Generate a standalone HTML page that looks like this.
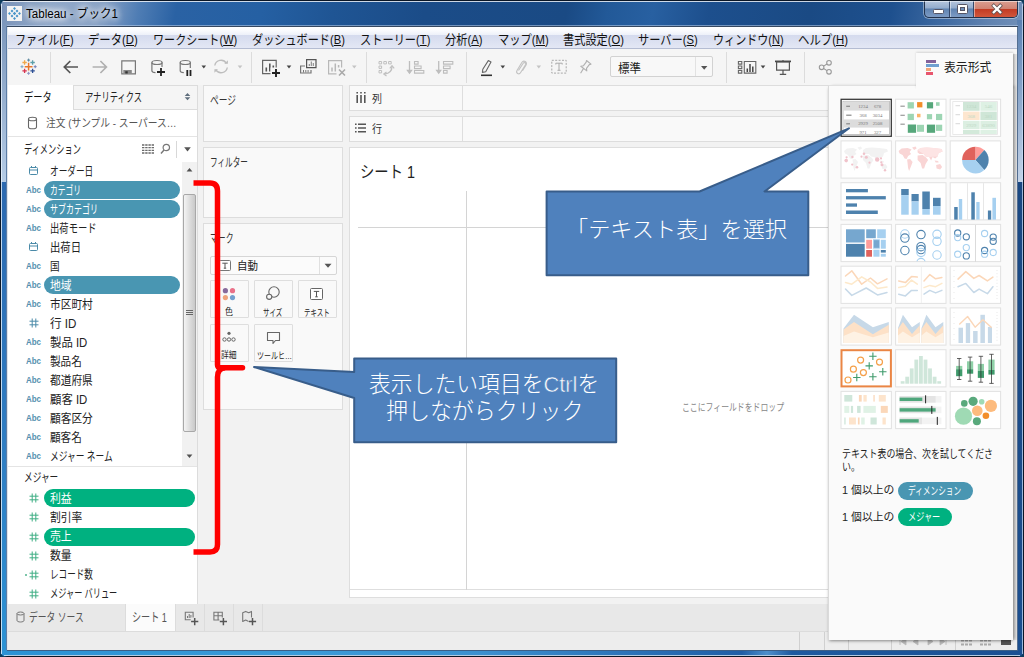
<!DOCTYPE html>
<html lang="ja"><head><meta charset="utf-8"><title>Tableau - ブック1</title>
<style>
html,body{margin:0;padding:0;background:#0d3b5a;}
body{width:1024px;height:657px;overflow:hidden;font-family:"Liberation Sans","Noto Sans CJK JP",sans-serif;}
#win{position:absolute;left:0;top:0;width:1024px;height:657px;overflow:hidden;background:#1b4a84;border-radius:7px 7px 7px 7px;}
#win *{position:absolute;box-sizing:border-box;}
#win u{position:static;}
.t{white-space:nowrap;transform-origin:0 50%;display:block;}
.t u{text-decoration:underline;text-underline-offset:1px;}
.pill{height:18px;border-radius:9px;}
.card{background:#f9f9f9;border:1px solid #dddddd;}
.sep{width:1px;background:#dcdcdc;top:52px;height:31px;}
.th{width:51px;height:38px;background:#fff;border:1px solid #e3e3e3;overflow:hidden;}
.th svg{left:0;top:0;}
.mbtn{width:39px;height:38px;border:1px solid #dedede;background:#f9f9f9;border-radius:1px;}

</style></head>
<body>
<div id="win">
<!-- window frame -->
<div id="frame-top" style="left:0;top:0;width:1024px;height:27px;background:linear-gradient(100deg,#7992b8 0px,#92a9c9 50px,#8aa3c6 100px,#4f7db4 138px,#2a62a4 175px,#2560a3 260px,#1f5594 330px,#1b4c88 420px,#1a4a84 560px,#225998 600px,#2860a1 645px,#1d4f8d 700px,#1a4a84 800px,#1e508e 880px,#3d69a1 930px,#6284b1 980px,#7795bc 1024px);"></div>
<div style="left:1px;top:1px;width:1022px;height:1px;background:rgba(255,255,255,.55)"></div>
<div style="left:0;top:0;width:1024px;height:1px;background:#0a1626"></div>
<!-- left frame -->
<div style="left:0;top:20px;width:8px;height:162px;background:linear-gradient(#7b96bb,#b5cce6)"></div>
<div style="left:0;top:182px;width:8px;height:475px;background:linear-gradient(#2c69b0,#2f7fc4 60%,#2b92d4)"></div>
<div style="left:0;top:4px;width:1px;height:650px;background:#0a1626"></div>
<div style="left:1px;top:4px;width:1px;height:650px;background:rgba(235,245,255,.8)"></div>
<div style="left:6px;top:26px;width:1px;height:624px;background:#5d7da6"></div>
<div style="left:7px;top:26px;width:1px;height:624px;background:#dfe5ec"></div>
<!-- right frame -->
<div style="left:1017px;top:20px;width:7px;height:162px;background:linear-gradient(#5a80b2,#c3d3e8)"></div>
<div style="left:1017px;top:182px;width:7px;height:475px;background:linear-gradient(#1a4882,#1b4f90)"></div>
<div style="left:1017px;top:26px;width:1px;height:624px;background:#546f92"></div>
<div style="left:1022px;top:4px;width:1px;height:650px;background:rgba(200,220,245,.75)"></div>
<div style="left:1023px;top:4px;width:1px;height:650px;background:#0a1626"></div>
<!-- bottom frame -->
<div style="left:2px;top:650px;width:1020px;height:5px;background:linear-gradient(90deg,#2b92d4 0,#3a9bd8 300px,#3c90cf 480px,#2a70b6 640px,#1f5ea6 740px,#4d8fcb 765px,#1d5aa0 790px,#1b4f92 1020px)"></div>
<div style="left:7px;top:650px;width:1011px;height:1px;background:#3c5f86"></div>
<div style="left:4px;top:655px;width:1016px;height:1px;background:rgba(215,235,250,.8)"></div>
<div style="left:4px;top:656px;width:1016px;height:1px;background:#0a1626"></div>
<!-- title icon -->
<div style="left:7px;top:6px;width:15px;height:15px;background:#f3f3f3;"></div>
<svg style="left:7px;top:6px" width="15" height="15" viewBox="0 0 15 15"><path d="M7.50 1.05l1.45 1.45-1.45 1.45-1.45-1.45zM5.00 3.55l1.45 1.45-1.45 1.45-1.45-1.45zM2.50 6.05l1.45 1.45-1.45 1.45-1.45-1.45zM10.00 3.55l1.45 1.45-1.45 1.45-1.45-1.45zM7.50 5.80l1.70 1.70-1.70 1.70-1.70-1.70zM5.00 8.55l1.45 1.45-1.45 1.45-1.45-1.45zM12.50 6.05l1.45 1.45-1.45 1.45-1.45-1.45zM10.00 8.55l1.45 1.45-1.45 1.45-1.45-1.45zM7.50 11.05l1.45 1.45-1.45 1.45-1.45-1.45z" fill="#4693c8"/></svg>
<!-- window buttons -->
<div style="left:924px;top:0;width:94px;height:18px;border:1px solid #22324c;border-top:none;border-radius:0 0 5px 5px;background:linear-gradient(#b9c9df 0,#93abcc 48%,#5f83b1 52%,#7d9bc4 100%);overflow:hidden;box-shadow:0 0 0 1px rgba(255,255,255,.4)">
  <div style="left:49px;top:0;width:45px;height:18px;background:linear-gradient(#dba194 0,#d08373 48%,#c23c24 52%,#d3593d 100%);"></div>
  <div style="left:24px;top:0;width:1px;height:18px;background:#34486a"></div>
  <div style="left:25px;top:0;width:1px;height:18px;background:rgba(255,255,255,.45)"></div>
  <div style="left:48px;top:0;width:1px;height:18px;background:#34486a"></div>
  <div style="left:49px;top:0;width:1px;height:18px;background:rgba(255,255,255,.45)"></div>
  <div style="left:8px;top:9px;width:11px;height:5px;background:#fff;border:1px solid #556;border-radius:1.500px"></div>
  <div style="left:32px;top:4px;width:11px;height:10px;background:#fff;border:1px solid #556;border-radius:1.500px"></div>
  <div style="left:35px;top:7px;width:5px;height:4px;background:#6f8fba;border:1px solid #556;"></div>
  <svg style="left:64.500px;top:3px" width="14" height="12" viewBox="0 0 14 12"><path d="M3.800 2.800l6.400 6.400M10.200 2.800l-6.400 6.400" stroke="#655" stroke-width="3.800" stroke-linecap="square"/><path d="M3.800 2.800l6.400 6.400M10.200 2.800l-6.400 6.400" stroke="#fff" stroke-width="2.300" stroke-linecap="square"/></svg>
</div>
<div style="left:1px;top:1px;width:1022px;height:1px;background:rgba(255,255,255,.5);border-radius:6px"></div>
<div style="left:3px;top:0;width:1018px;height:1px;background:#0a1626"></div>
<div style="left:7px;top:25px;width:1011px;height:1px;background:rgba(190,210,235,.55)"></div>
<div style="left:7px;top:26px;width:1011px;height:1px;background:#364860"></div>
<!-- client -->
<div id="client" style="left:8px;top:27px;width:1009px;height:623px;background:#f2f2f2;"></div>
<!-- menu bar -->
<div style="left:8px;top:27px;width:1009px;height:22px;background:linear-gradient(#ffffff 0,#fbfcfe 3px,#edf0f9 8px,#d5dbee 8.5px,#e3e7f4 21px,#b4bcd2 21px,#b4bcd2 22px);"></div>
<!-- toolbar -->
<div style="left:8px;top:49px;width:1009px;height:36px;background:#f5f5f5;"></div>
<div class="sep" style="left:50px"></div>
<div class="sep" style="left:251px"></div>
<div class="sep" style="left:366px"></div>
<div class="sep" style="left:466px"></div>
<div class="sep" style="left:726px"></div>
<div class="sep" style="left:804px"></div>
<!-- TOOLBAR-ICONS-START -->
<svg style="left:0;top:49px" width="1024" height="37" viewBox="0 49 1024 37" fill="none">
  <!-- tableau logo -->
  <g stroke-width="1.5">
    <path d="M28.600 62.800v7.800M24.700 66.700h7.800" stroke="#e8762c" stroke-width="1.500"/>
    <path d="M24.600 60.300v4.400M22.400 62.500h4.400" stroke="#f0a84a" stroke-width="1.300"/>
    <path d="M32.600 60.300v4.400M30.400 62.500h4.400" stroke="#5b9ea9" stroke-width="1.300"/>
    <path d="M24.600 68.700v4.400M22.400 70.900h4.400" stroke="#d8334f" stroke-width="1.300"/>
    <path d="M32.600 68.700v4.400M30.400 70.900h4.400" stroke="#2c4f94" stroke-width="1.300"/>
    <path d="M28.600 58.600v3M27.100 60.100h3" stroke="#5b879e" stroke-width="1"/>
    <path d="M28.600 71.800v3M27.100 73.300h3" stroke="#8a94c4" stroke-width="1"/>
    <path d="M22 65.200v3M20.500 66.700h3" stroke="#7aa5c8" stroke-width="1"/>
    <path d="M35.200 65.200v3M33.700 66.700h3" stroke="#6f7fb8" stroke-width="1"/>
  </g>
  <!-- back / forward -->
  <path d="M78 67H64.500M70.300 61l-6 6 6 6" stroke="#555" stroke-width="1.700"/>
  <path d="M92.600 67H106M100.400 61l6 6-6 6" stroke="#b0b0b0" stroke-width="1.700"/>
  <!-- save -->
  <path d="M121.800 60.800h13.600v13h-13.600z" stroke="#777" stroke-width="1.200"/>
  <path d="M123.300 70h8.500v3.600h-8.500z" fill="#888" stroke="none"/>
  <path d="M125.300 71.300h2.400v2.300h-2.400z" fill="#333" stroke="none"/>
  <!-- new data source -->
  <path d="M151.900 62.500v8.200c0 1 1.600 1.800 3.600 2M162 62.500v4.500" stroke="#777" stroke-width="1.200"/>
  <ellipse cx="157" cy="62.500" rx="5.100" ry="2" stroke="#777" stroke-width="1.200"/>
  <path d="M161 68v8M157 72h8" stroke="#222" stroke-width="1.800"/>
  <!-- pause data source -->
  <path d="M180.200 62.500v8.200c0 1 1.600 1.800 3.600 2M190.300 62.500v5.500" stroke="#777" stroke-width="1.200"/>
  <ellipse cx="185.300" cy="62.500" rx="5.100" ry="2" stroke="#777" stroke-width="1.200"/>
  <path d="M187.300 70v6M190.500 70v6" stroke="#222" stroke-width="1.800"/>
  <path d="M201.500 65.500h4.600l-2.300 3z" fill="#444"/>
  <!-- refresh -->
  <path d="M214.800 65.500a6.300 6.300 0 0 1 11.600-2.200M227.300 67.500a6.300 6.300 0 0 1-11.600 2.200" stroke="#bdbdbd" stroke-width="1.400"/>
  <path d="M224.300 63.800h3.600v-3.600zM218 69.200h-3.600v3.600z" fill="#bdbdbd"/>
  <path d="M237.700 65.500h4.600l-2.300 3z" fill="#c4c4c4"/>
  <!-- new worksheet -->
  <path d="M262.600 60.400h13.600v13.300h-13.600z" stroke="#666" stroke-width="1.200"/>
  <path d="M266.300 71.500v-4M269.800 71.500v-8M273.300 71.500v-6" stroke="#555" stroke-width="1.600"/>
  <path d="M270.500 67.500h10v10h-10z" fill="#f5f5f5"/>
  <path d="M276 69v8M272 73h8" stroke="#222" stroke-width="1.900"/>
  <path d="M286.700 65.500h4.600l-2.300 3z" fill="#444"/>
  <!-- duplicate -->
  <path d="M305 66h-4.400v7h10.400v-3" stroke="#777" stroke-width="1.200"/>
  <path d="M303.500 72.500v-2.500M305.800 72.500v-2.500M308.100 72.500v-2.500" stroke="#777" stroke-width="1"/>
  <path d="M306.600 59.600h9.400v8h-9.400z" stroke="#555" stroke-width="1.200"/>
  <path d="M309.300 66v-2M311.300 66v-4.500M313.300 66v-3" stroke="#888" stroke-width="1.100"/>
  <!-- clear -->
  <path d="M328.600 60.600h13v13.200h-13z" stroke="#b8b8b8" stroke-width="1.200"/>
  <path d="M332 71.500v-4M335.300 71.500v-8M338.600 68v-3" stroke="#b8b8b8" stroke-width="1.500"/>
  <path d="M336.500 67.500h9v9h-9z" fill="#f5f5f5"/>
  <path d="M339 69.500l6 6M345 69.500l-6 6" stroke="#aaa" stroke-width="1.600"/>
  <path d="M352 65.500h4.600l-2.300 3z" fill="#c4c4c4"/>
  <!-- swap -->
  <g stroke="#c0c0c0" stroke-width="1">
    <path d="M379 61.500h2.600v2.400h-2.600zM383.800 61.500h2.600v2.400h-2.600zM388.600 61.500h2.600v2.400h-2.600zM379 66h2.600v2.400h-2.600zM379 70.500h2.600v2.400h-2.600z"/>
    <path d="M392 66.500c0 4.500-3 7-7.500 7.500" stroke-width="1.300"/>
    <path d="M389.800 68.300l2.200-2.600 2.200 2.600M386.500 72l-2.700 2 2.700 2" stroke-width="1.200"/>
  </g>
  <!-- sort asc -->
  <g stroke="#bdbdbd" stroke-width="1.100">
    <path d="M409.500 61v11" stroke-width="1.300"/><path d="M407.300 70.300h4.400l-2.200 3z" fill="#bdbdbd"/>
    <path d="M414.500 61.500h3.600v2.600h-3.600zM414.500 66h6.600v2.600h-6.600zM414.500 70.500h9.300v2.600h-9.300z"/>
    <path d="M438.700 61v11" stroke-width="1.300"/><path d="M436.500 70.300h4.400l-2.200 3z" fill="#bdbdbd"/>
    <path d="M443.500 61.500h9.300v2.600h-9.300zM443.500 66h6.600v2.600h-6.600zM443.500 70.500h3.600v2.600h-3.600z"/>
  </g>
  <!-- highlight pen -->
  <path d="M488.300 60.600l2.700 1.400-5.300 9.800-3.300.6.400-3.200z" stroke="#666" stroke-width="1.100" stroke-linejoin="round"/>
  <path d="M481 75.300h11" stroke="#333" stroke-width="1.600"/>
  <path d="M500.500 65.500h4.600l-2.300 3z" fill="#444"/>
  <!-- paperclip -->
  <path d="M518.500 70.500l4.700-7.200c1-1.500 3.200-.3 2.300 1.400l-5 8c-1.500 2.300-5 .4-3.500-2.200l4.800-8c1.800-2.700 6-.6 4.300 2.400l-3.600 5.800" stroke="#c2c2c2" stroke-width="1.100"/>
  <path d="M536.500 65.500h4.600l-2.300 3z" fill="#c4c4c4"/>
  <!-- T box -->
  <path d="M551.800 60.300h14.400v12.800h-14.400z" stroke="#a8a8a8" stroke-width="1" stroke-dasharray="2 1.400"/>
  <path d="M555.800 64.500v-1.300h6.400v1.300M559 63.200v7M557.500 70.300h3" stroke="#aaa" stroke-width="1"/>
  <!-- pin -->
  <path d="M586.500 60.500l4.500 3.700-1.700.4-2.800 3.700.3 2.600-6-4.600 2.700-.6 2.700-3.600zM583.400 68.600l-2.800 4.600" stroke="#b0b0b0" stroke-width="1.100" stroke-linejoin="round"/>
  <!-- show cards -->
  <g stroke="#666" stroke-width="1.100">
    <path d="M738.400 61.500h3.400v2.600h-3.400zM738.400 66h3.400v2.600h-3.400zM738.400 70.500h3.400v2.600h-3.400z"/>
    <path d="M744.300 61.500h11.500v11.600h-11.500z"/>
    <path d="M747.300 72v-3.500M750 72v-8M752.800 72v-5.500" stroke="#444" stroke-width="1.500"/>
  </g>
  <path d="M760.700 65.500h4.600l-2.300 3z" fill="#444"/>
  <!-- presentation -->
  <path d="M775 61.400h16" stroke="#444" stroke-width="1.700"/>
  <path d="M776.600 62h12.800v8.200h-12.800zM783 70.200v4M779.800 74.300h6.400M783 60v1" stroke="#555" stroke-width="1.200"/>
  <!-- share -->
  <g stroke="#9a9a9a" stroke-width="1.100">
    <circle cx="829" cy="62.800" r="2.300"/><circle cx="821.600" cy="67.300" r="2.300"/><circle cx="829" cy="71.800" r="2.300"/>
    <path d="M827 64l-3.400 2.100M823.600 68.500l3.400 2.100"/>
  </g>
</svg>
<!-- TOOLBAR-ICONS-END -->
<!-- dropdown -->
<div style="left:610px;top:56px;width:103px;height:21px;background:#f8f8f8;border:1px solid #d2d2d2;border-radius:2px"></div>
<div style="left:695px;top:57px;width:1px;height:19px;background:#e2e2e2"></div>
<svg style="left:700px;top:64.500px" width="9" height="6" viewBox="0 0 9 6"><path d="M1 1h6.400l-3.200 3.800z" fill="#555"/></svg>
<!-- left pane -->
<div style="left:8px;top:85px;width:190px;height:519px;background:#fff;border-right:1px solid #dcdcdc"></div>
<div style="left:73px;top:85px;width:125px;height:25px;background:#f5f5f5;border:1px solid #dcdcdc;"></div>
<svg style="left:184px;top:93px" width="7" height="8" viewBox="0 0 7 8"><path d="M.7 3.100l2.800-3 2.800 3zM.7 4.300l2.800 3 2.800-3z" fill="#5f6e7c"/></svg>
<svg style="left:27px;top:116px" width="11" height="14" viewBox="0 0 11 14"><path d="M1.5 3v8c0 1 1.8 1.8 4 1.8s4-.8 4-1.8V3" fill="none" stroke="#666" stroke-width="1.1"/><ellipse cx="5.5" cy="3" rx="4" ry="1.8" fill="none" stroke="#666" stroke-width="1.1"/></svg>
<div style="left:8px;top:136px;width:189px;height:1px;background:#e4e4e4"></div>
<!-- dim header icons -->
<svg style="left:142px;top:144px" width="12" height="10" viewBox="0 0 12 10"><path d="M0 1h12M0 3.7h12M0 6.4h12M0 9h12" stroke="#6a6a6a" stroke-width="1.300" stroke-dasharray="2.400 .800"/></svg>
<svg style="left:160px;top:143px" width="11" height="12" viewBox="0 0 11 12"><circle cx="6.3" cy="4.5" r="3.2" fill="none" stroke="#777" stroke-width="1.2"/><path d="M4 7l-3 3.5" stroke="#777" stroke-width="1.4"/></svg>
<div style="left:176px;top:141px;width:1px;height:17px;background:#d8d8d8"></div>
<svg style="left:184px;top:146.500px" width="7" height="5" viewBox="0 0 7 5"><path d="M.2 .3h6.600l-3.300 4.200z" fill="#555"/></svg>
<!-- scrollbar -->
<div style="left:182px;top:162px;width:15px;height:304px;background:#f1f1f1"></div>
<div style="left:183px;top:194px;width:13px;height:238px;background:linear-gradient(90deg,#f4f4f4,#dedede 50%,#c9c9c9);border:1px solid #a8a8a8;border-radius:2px"></div>
<div style="left:186px;top:310px;width:7px;height:1px;background:#666;box-shadow:0 2px 0 #666,0 4px 0 #666"></div>
<svg style="left:186px;top:167px" width="7" height="5" viewBox="0 0 7 5"><path d="M.6 4.500h5.800l-2.900-3.600z" fill="#505050"/></svg>
<svg style="left:186px;top:454px" width="7" height="5" viewBox="0 0 7 5"><path d="M.6 .5h5.800l-2.900 3.600z" fill="#505050"/></svg>
<div style="left:8px;top:466px;width:189px;height:1px;background:#e4e4e4"></div>
<!-- cards -->
<div class="card" style="left:203px;top:85px;width:140px;height:57px"></div>
<div class="card" style="left:203px;top:147px;width:140px;height:71px"></div>
<div class="card" style="left:203px;top:223px;width:140px;height:187px"></div>
<!-- marks dropdown -->
<div style="left:210px;top:256px;width:127px;height:19px;background:#fbfbfb;border:1px solid #d6d6d6;border-radius:2px"></div>
<div style="left:319px;top:257px;width:1px;height:17px;background:#e0e0e0"></div>
<svg style="left:324px;top:263px" width="8" height="6" viewBox="0 0 8 6"><path d="M.5 .8h7l-3.5 4z" fill="#555"/></svg>
<svg style="left:219px;top:260px" width="12" height="11" viewBox="0 0 12 11"><rect x=".5" y=".5" width="11" height="10" rx="1" fill="#fff" stroke="#777"/><path d="M3.3 3.2h5.4M6 3.2v5M4.8 8.2h2.4" stroke="#555" stroke-width="1" fill="none"/></svg>
<!-- marks buttons -->
<div class="mbtn" style="left:210px;top:280px"></div>
<div class="mbtn" style="left:254px;top:280px"></div>
<div class="mbtn" style="left:298px;top:280px"></div>
<div class="mbtn" style="left:210px;top:324px"></div>
<div class="mbtn" style="left:254px;top:324px"></div>
<svg style="left:222px;top:286.700px" width="15" height="15" viewBox="0 0 15 15"><circle cx="3.400" cy="3.700" r="2.600" fill="#876a9c"/><circle cx="10.500" cy="3.700" r="2.600" fill="#ea7088"/><circle cx="3.400" cy="10.600" r="2.600" fill="#efa47c"/><circle cx="10.500" cy="10.600" r="2.600" fill="#74a0d0"/></svg>
<svg style="left:265px;top:286px" width="16" height="15" viewBox="0 0 16 15"><circle cx="9" cy="6" r="5.2" fill="none" stroke="#666" stroke-width="1.1"/><circle cx="4.2" cy="10.8" r="2.6" fill="#f9f9f9" stroke="#666" stroke-width="1.1"/></svg>
<svg style="left:310px;top:288px" width="13" height="12" viewBox="0 0 13 12"><rect x=".5" y=".5" width="12" height="11" rx="1" fill="#fff" stroke="#666"/><path d="M3.8 3.4h5.4M6.5 3.4v5.4M5.2 8.8h2.6" stroke="#555" stroke-width="1" fill="none"/></svg>
<svg style="left:222px;top:331px" width="14" height="12" viewBox="0 0 14 12"><circle cx="7" cy="2.3" r="1.6" fill="#666"/><circle cx="2.5" cy="8.5" r="1.7" fill="none" stroke="#666"/><circle cx="7" cy="8.5" r="1.7" fill="none" stroke="#666"/><circle cx="11.5" cy="8.5" r="1.7" fill="none" stroke="#666"/></svg>
<svg style="left:266px;top:331px" width="15" height="14" viewBox="0 0 15 14"><path d="M1.5 1.5h12v8h-4l-2.5 3v-3h-5.5z" fill="none" stroke="#666" stroke-width="1.1" stroke-linejoin="round"/></svg>
<!-- shelves -->
<div class="card" style="left:349px;top:85px;width:668px;height:26px;border-right:none"></div>
<div style="left:462px;top:86px;width:1px;height:24px;background:#dedede"></div>
<div class="card" style="left:349px;top:116px;width:668px;height:26px;border-right:none"></div>
<div style="left:462px;top:117px;width:1px;height:24px;background:#dedede"></div>
<svg style="left:356px;top:92px" width="10" height="11" viewBox="0 0 10 11"><path d="M1.2 0v1.6M1.2 3v8M5 0v1.6M5 3v8M8.8 0v1.6M8.8 3v8" stroke="#555" stroke-width="1.6"/></svg>
<svg style="left:355px;top:123px" width="11" height="10" viewBox="0 0 11 10"><path d="M0 1.2h1.6M3 1.2h8M0 5h1.6M3 5h8M0 8.8h1.6M3 8.8h8" stroke="#555" stroke-width="1.6"/></svg>
<!-- sheet -->
<div style="left:349px;top:147px;width:668px;height:443px;background:#fff;border:1px solid #dedede;border-right:none"></div>
<div style="left:349px;top:590px;width:668px;height:8px;background:#fff;border:1px solid #dedede;border-top:none;border-right:none"></div>
<div style="left:358px;top:227px;width:470px;height:1px;background:#d4d4d4"></div>
<div style="left:466px;top:191px;width:1px;height:399px;background:#d4d4d4"></div>
<!-- bottom tab bar -->
<div style="left:8px;top:604px;width:1009px;height:28px;background:#e8e8e8;border-bottom:1px solid #dcdcdc"></div>
<div style="left:125px;top:604px;width:51px;height:27px;background:#fbfbfb;border-left:1px solid #dcdcdc;border-right:1px solid #dcdcdc"></div>
<div style="left:204px;top:604px;width:1px;height:27px;background:#dcdcdc"></div>
<div style="left:233px;top:604px;width:1px;height:27px;background:#dcdcdc"></div>
<div style="left:262px;top:604px;width:1px;height:27px;background:#dcdcdc"></div>
<svg style="left:16px;top:611px" width="9" height="12" viewBox="0 0 9 12"><path d="M1 2.5v7c0 .8 1.5 1.5 3.5 1.5s3.5-.7 3.5-1.5v-7" fill="none" stroke="#777" stroke-width="1"/><ellipse cx="4.5" cy="2.5" rx="3.5" ry="1.5" fill="none" stroke="#777"/></svg>
<!-- new sheet icons -->
<svg style="left:180px;top:606px" width="80" height="22" viewBox="180 606 80 22" fill="none">
<path d="M185.300 612.200h7.800v7.600h-7.800z" stroke="#777" stroke-width="1.100"/><path d="M187.500 618v-2M189.200 618v-4M190.900 618v-3" stroke="#777" stroke-width="1"/>
<path d="M190.700 617.600h8v8h-8z" fill="#e8e8e8"/><path d="M194.700 618v7.200M191.100 621.600h7.200" stroke="#555" stroke-width="1.500"/>
<path d="M213.900 612.200h8.400v7.800h-8.400zM213.900 615.800h8.400M218.100 612.200v7.800" stroke="#777" stroke-width="1.100"/>
<path d="M219.400 617.600h8v8h-8z" fill="#e8e8e8"/><path d="M223.400 618v7.200M219.800 621.600h7.200" stroke="#555" stroke-width="1.500"/>
<path d="M242.700 612.800l3-1.400 3 1.400 2.800-1.400v8.600l-2.800 1.400-3-1.400-3 1.400z" stroke="#777" stroke-width="1.100" stroke-linejoin="round"/>
<path d="M248.500 617.600h8v8h-8z" fill="#e8e8e8"/><path d="M252.500 618v7.200M248.900 621.600h7.200" stroke="#555" stroke-width="1.500"/>
</svg>
<!-- status bar -->
<div style="left:8px;top:632px;width:1009px;height:18px;background:#ededed"></div>
<div style="left:799px;top:632px;width:1px;height:18px;background:#d0d0d0"></div>
<div style="left:824px;top:632px;width:1px;height:18px;background:#d0d0d0"></div>
<div style="left:848px;top:632px;width:1px;height:18px;background:#d0d0d0"></div>
<div style="left:891px;top:632px;width:1px;height:18px;background:#d0d0d0"></div>
<div style="left:955px;top:632px;width:1px;height:18px;background:#d0d0d0"></div>
<div style="left:1001px;top:640px;width:10px;height:5px;background:#555"></div>
<svg style="left:961px;top:639px" width="34" height="7" viewBox="0 0 34 7"><path d="M0 1.5h11M0 5.500h11M19 1.500h11M19 5.500h11" stroke="#aaa" stroke-width="2" stroke-dasharray="3 1"/></svg>
<svg style="left:898px;top:637px" width="52" height="9" viewBox="0 0 52 9"><path d="M2 1v7M8 1v7l-5-3.500zM20 1v7l-5-3.500zM30 1v7l5-3.500zM42 1v7l5-3.500zM48 1v7" fill="#b8b8b8" stroke="#b8b8b8" stroke-width=".800"/></svg>
<div style="left:1013px;top:54px;width:4px;height:586px;background:linear-gradient(90deg,#cdcdcd,#e4e4e4)"></div>
<!-- show me panel -->
<div style="left:828px;top:85px;width:185px;height:555px;background:#fafafa;border-left:1px solid #dadada;border-top:1px solid #e0e0e0;box-shadow:0 2px 3px -1px rgba(0,0,0,.4),3px 0 3px -1px rgba(0,0,0,.22);"></div>
<div style="left:916px;top:53px;width:97px;height:36px;background:#fafafa;box-shadow:0 -1px 2px rgba(0,0,0,.12),2px 0 2px -1px rgba(0,0,0,.2);"></div>
<div style="left:916px;top:85px;width:97px;height:6px;background:#fafafa;"></div>
<div style="left:926px;top:60.300px;width:10px;height:2.600px;background:#83629a"></div>
<div style="left:926px;top:64.200px;width:13px;height:2.600px;background:#6fa0d0"></div>
<div style="left:926px;top:68.100px;width:5px;height:2.600px;background:#f0a478"></div>
<div style="left:926px;top:72px;width:7px;height:2.600px;background:#e8556e"></div>
<!-- THUMBS-START -->
<svg style="left:829px;top:90px" width="184" height="345" viewBox="829 90 184 345" fill="none" font-family="Liberation Serif,serif">
<rect x="841.1" y="99.3" width="50.2" height="37.0" fill="#fff" stroke="#333" stroke-width="1.25"/>
<rect x="895.6" y="99.2" width="50.4" height="37.2" fill="#fff" stroke="#e2e2e2" stroke-width="1"/>
<rect x="950.2" y="99.2" width="50.4" height="37.2" fill="#fff" stroke="#e2e2e2" stroke-width="1"/>
<rect x="841.0" y="140.9" width="50.4" height="37.2" fill="#fff" stroke="#e2e2e2" stroke-width="1"/>
<rect x="895.6" y="140.9" width="50.4" height="37.2" fill="#fff" stroke="#e2e2e2" stroke-width="1"/>
<rect x="950.2" y="140.9" width="50.4" height="37.2" fill="#fff" stroke="#e2e2e2" stroke-width="1"/>
<rect x="841.0" y="182.7" width="50.4" height="37.2" fill="#fff" stroke="#e2e2e2" stroke-width="1"/>
<rect x="895.6" y="182.7" width="50.4" height="37.2" fill="#fff" stroke="#e2e2e2" stroke-width="1"/>
<rect x="950.2" y="182.7" width="50.4" height="37.2" fill="#fff" stroke="#e2e2e2" stroke-width="1"/>
<rect x="841.0" y="224.4" width="50.4" height="37.2" fill="#fff" stroke="#e2e2e2" stroke-width="1"/>
<rect x="895.6" y="224.4" width="50.4" height="37.2" fill="#fff" stroke="#e2e2e2" stroke-width="1"/>
<rect x="950.2" y="224.4" width="50.4" height="37.2" fill="#fff" stroke="#e2e2e2" stroke-width="1"/>
<rect x="841.0" y="266.2" width="50.4" height="37.2" fill="#fff" stroke="#e2e2e2" stroke-width="1"/>
<rect x="895.6" y="266.2" width="50.4" height="37.2" fill="#fff" stroke="#e2e2e2" stroke-width="1"/>
<rect x="950.2" y="266.2" width="50.4" height="37.2" fill="#fff" stroke="#e2e2e2" stroke-width="1"/>
<rect x="841.0" y="307.9" width="50.4" height="37.2" fill="#fff" stroke="#e2e2e2" stroke-width="1"/>
<rect x="895.6" y="307.9" width="50.4" height="37.2" fill="#fff" stroke="#e2e2e2" stroke-width="1"/>
<rect x="950.2" y="307.9" width="50.4" height="37.2" fill="#fff" stroke="#e2e2e2" stroke-width="1"/>
<rect x="841.5" y="350.2" width="49.4" height="36.2" fill="#fff" stroke="#ea8544" stroke-width="2"/>
<rect x="895.6" y="349.7" width="50.4" height="37.2" fill="#fff" stroke="#e2e2e2" stroke-width="1"/>
<rect x="950.2" y="349.7" width="50.4" height="37.2" fill="#fff" stroke="#e2e2e2" stroke-width="1"/>
<rect x="841.0" y="391.4" width="50.4" height="37.2" fill="#fff" stroke="#e2e2e2" stroke-width="1"/>
<rect x="895.6" y="391.4" width="50.4" height="37.2" fill="#fff" stroke="#e2e2e2" stroke-width="1"/>
<rect x="950.2" y="391.4" width="50.4" height="37.2" fill="#fff" stroke="#e2e2e2" stroke-width="1"/>
<rect x="843.0" y="101.3" width="46.4" height="33.3" fill="#fff" stroke="#b5b5b5" stroke-width="0.8"/>
<rect x="843.4" y="101.7" width="45.6" height="8.9" fill="#dcdcdc" />
<rect x="843.4" y="119.4" width="45.6" height="8.2" fill="#dcdcdc" />
<text x="863" y="108.2" font-size="4.8" fill="#777" text-anchor="middle">1234</text>
<text x="877.5" y="108.2" font-size="4.8" fill="#777" text-anchor="middle">678</text>
<text x="863" y="116.8" font-size="4.8" fill="#777" text-anchor="middle">368</text>
<text x="877.5" y="116.8" font-size="4.8" fill="#777" text-anchor="middle">3034</text>
<text x="863" y="125.4" font-size="4.8" fill="#777" text-anchor="middle">2929</text>
<text x="877.5" y="125.4" font-size="4.8" fill="#777" text-anchor="middle">2508</text>
<text x="863" y="134.0" font-size="4.8" fill="#777" text-anchor="middle">971</text>
<text x="877.5" y="134.0" font-size="4.8" fill="#777" text-anchor="middle">327</text>
<rect x="846.2" y="105.7" width="3.8" height="1.2" fill="#888" />
<rect x="846.2" y="114.6" width="5.3" height="1.2" fill="#888" />
<rect x="846.2" y="123.2" width="3.8" height="1.2" fill="#888" />
<rect x="900.4" y="105.6" width="4.4" height="1.2" fill="#999" />
<rect x="900.4" y="114.7" width="4.4" height="1.2" fill="#999" />
<rect x="900.4" y="123.6" width="4.4" height="1.2" fill="#999" />
<rect x="907.6" y="102.2" width="6.3" height="6.3" fill="#9dd5b3" />
<rect x="917.1" y="102.1" width="5.3" height="5.3" fill="#f28e2b" />
<rect x="926.9" y="102.2" width="6.2" height="6.2" fill="#56a77b" />
<rect x="936.0" y="102.2" width="3.6" height="3.6" fill="#9dd5b3" />
<rect x="907.6" y="113.8" width="6.3" height="6.3" fill="#9dd5b3" />
<rect x="917.0" y="113.8" width="3.5" height="3.5" fill="#fbb66b" />
<rect x="926.9" y="114.1" width="5.2" height="5.2" fill="#9dd5b3" />
<rect x="936.0" y="113.9" width="6.2" height="6.2" fill="#9dd5b3" />
<rect x="907.8" y="124.5" width="8.3" height="8.3" fill="#56a77b" />
<rect x="917.0" y="124.8" width="7.0" height="7.0" fill="#9dd5b3" />
<rect x="926.9" y="124.6" width="8.2" height="8.2" fill="#56a77b" />
<rect x="936.0" y="124.7" width="6.2" height="6.2" fill="#9dd5b3" />
<rect x="952.8" y="101.6" width="44.8" height="32.8" fill="#fff" stroke="#e4e4e4" stroke-width="0.8"/>
<rect x="955.5" y="105.2" width="4.5" height="1.0" fill="#d8d8d8" />
<rect x="955.5" y="114.2" width="4.5" height="1.0" fill="#d8d8d8" />
<rect x="955.5" y="123.2" width="4.5" height="1.0" fill="#d8d8d8" />
<rect x="963.0" y="102.0" width="16.6" height="8.8" fill="#cfe6d7" />
<rect x="980.4" y="102.0" width="16.4" height="8.8" fill="#def1e4" />
<rect x="963.0" y="111.6" width="16.6" height="8.4" fill="#fde6cf" />
<rect x="980.4" y="111.6" width="16.4" height="8.4" fill="#cfe6d7" />
<rect x="963.0" y="120.8" width="16.6" height="8.4" fill="#dcefe2" />
<rect x="980.4" y="120.8" width="16.4" height="8.4" fill="#dcefe2" />
<rect x="963.0" y="130.0" width="16.6" height="4.0" fill="#d3e9da" />
<rect x="980.4" y="130.0" width="16.4" height="4.0" fill="#def1e4" />
<text x="971.3" y="108.3" font-size="5" fill="#bcd8c5" text-anchor="middle">1234</text>
<text x="988.6" y="108.3" font-size="5" fill="#bcd8c5" text-anchor="middle">546</text>
<text x="971.3" y="117.5" font-size="5" fill="#bcd8c5" text-anchor="middle">368</text>
<text x="988.6" y="117.5" font-size="5" fill="#bcd8c5" text-anchor="middle">381</text>
<text x="971.3" y="126.7" font-size="5" fill="#bcd8c5" text-anchor="middle">2929</text>
<text x="988.6" y="126.7" font-size="5" fill="#bcd8c5" text-anchor="middle">63890</text>
<polygon points="844.0,151.0 847.0,148.5 853.0,148.0 857.0,149.5 855.0,152.0 856.5,154.0 853.5,156.0 852.0,159.0 850.0,158.5 848.0,155.0 845.0,153.5" fill="#f2f2f2"/>
<polygon points="857.5,147.5 861.0,146.5 862.0,148.5 859.5,150.0" fill="#f2f2f2"/>
<polygon points="852.5,159.5 855.5,159.0 858.0,162.0 856.5,166.0 854.5,171.0 853.5,168.0 853.0,163.5" fill="#f2f2f2"/>
<polygon points="863.0,150.0 866.0,148.0 872.0,147.5 879.0,148.0 887.0,149.0 888.0,151.5 884.0,153.0 883.0,156.5 880.5,158.5 878.0,157.0 876.5,160.5 874.5,157.0 871.0,156.5 869.0,154.0 865.0,154.0 863.0,152.5" fill="#f2f2f2"/>
<polygon points="863.0,155.5 868.0,155.0 871.5,157.5 873.5,160.0 871.0,164.0 869.5,168.5 867.5,168.5 866.0,163.0 863.0,160.0" fill="#f2f2f2"/>
<polygon points="881.5,165.0 885.5,164.0 887.5,167.0 885.5,169.5 882.0,168.5" fill="#f2f2f2"/>
<polygon points="880.0,160.5 883.5,161.0 884.0,162.5 881.0,162.5" fill="#f2f2f2"/>
<circle cx="846.6" cy="157.3" r="1.1" fill="#f0c3cb"/>
<circle cx="846.2" cy="160.6" r="1.8" fill="#f0c3cb"/>
<circle cx="852.4" cy="157.0" r="1.2" fill="#f0c3cb"/>
<circle cx="852.2" cy="164.6" r="1.1" fill="#f0c3cb"/>
<circle cx="857.0" cy="167.2" r="1.3" fill="#f0c3cb"/>
<circle cx="861.5" cy="156.7" r="1.1" fill="#f0c3cb"/>
<circle cx="864.0" cy="153.8" r="1.3" fill="#f0c3cb"/>
<circle cx="866.3" cy="157.2" r="1.5" fill="#f0c3cb"/>
<circle cx="869.5" cy="162.7" r="1.1" fill="#f0c3cb"/>
<circle cx="877.2" cy="159.5" r="2.2" fill="#f0c3cb"/>
<circle cx="881.0" cy="158.4" r="1.1" fill="#f0c3cb"/>
<circle cx="881.3" cy="162.4" r="1.1" fill="#f0c3cb"/>
<circle cx="882.0" cy="164.7" r="1.5" fill="#f0c3cb"/>
<circle cx="885.0" cy="170.2" r="1.2" fill="#f0c3cb"/>
<polygon points="898.6,151.0 901.6,148.5 907.6,148.0 911.6,149.5 909.6,152.0 911.1,154.0 908.1,156.0 906.6,159.0 904.6,158.5 902.6,155.0 899.6,153.5" fill="#f9d5d5"/>
<polygon points="912.1,147.5 915.6,146.5 916.6,148.5 914.1,150.0" fill="#f9d5d5"/>
<polygon points="907.1,159.5 910.1,159.0 912.6,162.0 911.1,166.0 909.1,171.0 908.1,168.0 907.6,163.5" fill="#f9d5d5"/>
<polygon points="917.6,150.0 920.6,148.0 926.6,147.5 933.6,148.0 941.6,149.0 942.6,151.5 938.6,153.0 937.6,156.5 935.1,158.5 932.6,157.0 931.1,160.5 929.1,157.0 925.6,156.5 923.6,154.0 919.6,154.0 917.6,152.5" fill="#f9d5d5"/>
<polygon points="917.6,155.5 922.6,155.0 926.1,157.5 928.1,160.0 925.6,164.0 924.1,168.5 922.1,168.5 920.6,163.0 917.6,160.0" fill="#f9d5d5"/>
<polygon points="936.1,165.0 940.1,164.0 942.1,167.0 940.1,169.5 936.6,168.5" fill="#f9d5d5"/>
<polygon points="934.6,160.5 938.1,161.0 938.6,162.5 935.6,162.5" fill="#f9d5d5"/>
<polygon points="917.6,150.0 920.6,148.0 926.6,147.5 933.6,148.0 941.6,149.0 942.6,151.5 938.6,153.0 937.6,156.5 929.1,157.0 925.6,156.5 923.6,154.0" fill="#fde4e4"/>
<path d="M975.40 160.00 L975.40 146.70 A13.30 13.30 0 0 1 984.30 150.12 Z" fill="#ff9d9a"/>
<path d="M975.40 160.00 L984.30 150.12 A13.30 13.30 0 0 1 984.30 169.88 Z" fill="#4e82ad"/>
<path d="M975.40 160.00 L984.30 169.88 A13.30 13.30 0 0 1 962.10 160.00 Z" fill="#a6d0f0"/>
<path d="M975.40 160.00 L962.10 160.00 A13.30 13.30 0 0 1 975.40 146.70 Z" fill="#e0625c"/>
<rect x="846.0" y="189.0" width="21.9" height="3.3" fill="#4e82ad" />
<rect x="846.0" y="196.1" width="39.8" height="3.3" fill="#4e82ad" />
<rect x="846.0" y="203.4" width="11.0" height="3.3" fill="#4e82ad" />
<rect x="846.0" y="210.5" width="31.8" height="3.5" fill="#4e82ad" />
<rect x="901.2" y="189.0" width="7.5" height="6.1" fill="#4e82ad" />
<rect x="901.2" y="195.1" width="7.5" height="19.6" fill="#a6d0f0" />
<rect x="911.5" y="194.0" width="7.2" height="7.4" fill="#4e82ad" />
<rect x="911.5" y="201.4" width="7.2" height="13.3" fill="#a6d0f0" />
<rect x="922.3" y="191.5" width="7.5" height="17.5" fill="#4e82ad" />
<rect x="922.3" y="209.0" width="7.5" height="5.7" fill="#a6d0f0" />
<rect x="933.0" y="197.8" width="7.6" height="8.2" fill="#4e82ad" />
<rect x="933.0" y="206.0" width="7.6" height="8.7" fill="#a6d0f0" />
<rect x="967.3" y="183.2" width="0.7" height="36.4" fill="#ddd" />
<rect x="983.1" y="183.2" width="0.7" height="36.4" fill="#ddd" />
<rect x="954.2" y="207.0" width="3.5" height="12.6" fill="#4e82ad" />
<rect x="958.8" y="199.0" width="3.4" height="20.6" fill="#a6d0f0" />
<rect x="971.3" y="192.3" width="3.5" height="27.3" fill="#4e82ad" />
<rect x="976.3" y="202.0" width="3.3" height="17.6" fill="#a6d0f0" />
<rect x="987.9" y="210.5" width="3.3" height="9.1" fill="#4e82ad" />
<rect x="992.4" y="197.8" width="3.6" height="21.8" fill="#a6d0f0" />
<rect x="846.0" y="229.3" width="18.7" height="13.2" fill="#76a7cf" />
<rect x="846.0" y="243.9" width="18.7" height="12.8" fill="#4e82ad" />
<rect x="866.2" y="229.3" width="9.6" height="8.9" fill="#76a7cf" />
<rect x="877.2" y="229.3" width="8.6" height="8.9" fill="#a6d0f0" />
<rect x="866.2" y="239.8" width="5.8" height="8.9" fill="#ff9d9a" />
<rect x="866.2" y="250.0" width="5.8" height="6.7" fill="#e0625c" />
<rect x="873.4" y="239.8" width="6.1" height="8.4" fill="#76a7cf" stroke="#a6d0f0" stroke-width="0.8"/>
<rect x="880.8" y="239.8" width="5.0" height="8.9" fill="#a6d0f0" />
<rect x="873.4" y="249.7" width="6.1" height="7.0" fill="#a6d0f0" />
<rect x="880.8" y="250.0" width="5.0" height="2.6" fill="#4e82ad" />
<rect x="880.8" y="253.8" width="5.0" height="2.9" fill="#a6d0f0" />
<clipPath id="c11"><rect x="896.2" y="225" width="49.4" height="36.2"/></clipPath><g clip-path="url(#c11)">
<circle cx="904.9" cy="234.0" r="4.2" fill="none" stroke="#a6d0f0" stroke-width="1.1"/>
<circle cx="904.9" cy="238.1" r="4.2" fill="none" stroke="#4e82ad" stroke-width="1.1"/>
<circle cx="904.9" cy="250.5" r="4.2" fill="none" stroke="#4e82ad" stroke-width="1.1"/>
<circle cx="921.0" cy="234.6" r="4.2" fill="none" stroke="#4e82ad" stroke-width="1.1"/>
<circle cx="921.0" cy="246.7" r="4.2" fill="none" stroke="#4e82ad" stroke-width="1.1"/>
<circle cx="921.0" cy="249.6" r="4.2" fill="none" stroke="#4e82ad" stroke-width="1.1"/>
<circle cx="921.0" cy="252.4" r="4.2" fill="none" stroke="#a6d0f0" stroke-width="1.1"/>
<circle cx="937.0" cy="234.3" r="4.2" fill="none" stroke="#a6d0f0" stroke-width="1.1"/>
<circle cx="937.0" cy="241.3" r="4.2" fill="none" stroke="#a6d0f0" stroke-width="1.1"/>
<circle cx="937.0" cy="255.0" r="4.2" fill="none" stroke="#a6d0f0" stroke-width="1.1"/>
<circle cx="921.0" cy="262.6" r="4.2" fill="none" stroke="#a6d0f0" stroke-width="1.1"/>
</g>
<rect x="975.0" y="225.0" width="0.7" height="36.5" fill="#ccc" />
<circle cx="957.7" cy="233.0" r="3.1" fill="none" stroke="#4e82ad" stroke-width="1.1"/>
<circle cx="957.7" cy="237.6" r="3.1" fill="none" stroke="#a6d0f0" stroke-width="1.1"/>
<circle cx="966.3" cy="236.8" r="3.1" fill="none" stroke="#4e82ad" stroke-width="1.1"/>
<circle cx="966.3" cy="247.6" r="3.1" fill="none" stroke="#a6d0f0" stroke-width="1.1"/>
<circle cx="957.7" cy="254.2" r="3.1" fill="none" stroke="#a6d0f0" stroke-width="1.1"/>
<circle cx="966.3" cy="255.9" r="3.1" fill="none" stroke="#4e82ad" stroke-width="1.1"/>
<circle cx="984.6" cy="233.5" r="3.1" fill="none" stroke="#a6d0f0" stroke-width="1.1"/>
<circle cx="993.2" cy="237.1" r="3.1" fill="none" stroke="#4e82ad" stroke-width="1.1"/>
<circle cx="993.2" cy="241.3" r="3.1" fill="none" stroke="#4e82ad" stroke-width="1.1"/>
<circle cx="984.6" cy="250.5" r="3.1" fill="none" stroke="#4e82ad" stroke-width="1.1"/>
<circle cx="984.6" cy="254.2" r="3.1" fill="none" stroke="#a6d0f0" stroke-width="1.1"/>
<circle cx="993.2" cy="252.5" r="3.1" fill="none" stroke="#a6d0f0" stroke-width="1.1"/>
<polyline points="845.5,276.0 851.8,270.8 861.7,284.2 870.5,278.0 877.5,283.8 887.0,278.8" stroke="#fbd7b9" stroke-width="1.5" stroke-linejoin="round" stroke-linecap="round" />
<polyline points="845.5,282.6 851.8,284.2 861.7,276.8 870.5,282.0 877.5,288.4 887.0,287.1" stroke="#fde9cb" stroke-width="1.5" stroke-linejoin="round" stroke-linecap="round" />
<polyline points="845.5,289.0 851.8,295.4 866.2,288.0 877.5,294.9 887.0,292.5" stroke="#c7d9e8" stroke-width="1.5" stroke-linejoin="round" stroke-linecap="round" />
<rect x="920.9" y="267.0" width="0.6" height="36.0" fill="#e6e6e6" />
<polyline points="898.7,281.0 905.4,282.6 911.5,276.6 917.3,277.1" stroke="#fbd7b9" stroke-width="1.5" stroke-linejoin="round" stroke-linecap="round" />
<polyline points="898.7,287.6 905.4,286.2 911.5,280.1 917.3,284.1" stroke="#fde9cb" stroke-width="1.5" stroke-linejoin="round" stroke-linecap="round" />
<polyline points="898.7,294.2 905.4,295.9 911.5,290.4 917.3,290.4" stroke="#c7d9e8" stroke-width="1.5" stroke-linejoin="round" stroke-linecap="round" />
<polyline points="924.0,281.0 929.8,274.6 935.6,278.8 941.9,277.4" stroke="#fbd7b9" stroke-width="1.5" stroke-linejoin="round" stroke-linecap="round" />
<polyline points="924.0,287.6 929.8,285.4 935.6,286.7 941.9,283.4" stroke="#fde9cb" stroke-width="1.5" stroke-linejoin="round" stroke-linecap="round" />
<polyline points="924.0,294.2 929.8,290.4 935.6,292.9 941.9,290.4" stroke="#c7d9e8" stroke-width="1.5" stroke-linejoin="round" stroke-linecap="round" />
<polyline points="958.0,279.1 965.8,271.6 973.8,278.4 979.1,275.5 987.4,280.9 992.9,277.1" stroke="#fbd7b9" stroke-width="1.5" stroke-linejoin="round" stroke-linecap="round" />
<polyline points="958.0,286.7 965.8,283.4 973.8,292.5 979.1,289.1 987.4,293.7 992.9,286.7" stroke="#c7d9e8" stroke-width="1.5" stroke-linejoin="round" stroke-linecap="round" />
<rect x="953.0" y="270.5" width="2.0" height="0.5" fill="#e8e8e8" />
<rect x="953.0" y="276.0" width="2.0" height="0.5" fill="#e8e8e8" />
<rect x="953.0" y="281.5" width="2.0" height="0.5" fill="#e8e8e8" />
<rect x="953.0" y="287.0" width="2.0" height="0.5" fill="#e8e8e8" />
<rect x="953.0" y="292.5" width="2.0" height="0.5" fill="#e8e8e8" />
<rect x="953.0" y="298.0" width="2.0" height="0.5" fill="#e8e8e8" />
<rect x="996.0" y="270.5" width="2.0" height="0.5" fill="#e8e8e8" />
<rect x="996.0" y="273.6" width="2.0" height="0.5" fill="#e8e8e8" />
<rect x="996.0" y="276.7" width="2.0" height="0.5" fill="#e8e8e8" />
<rect x="996.0" y="279.8" width="2.0" height="0.5" fill="#e8e8e8" />
<rect x="996.0" y="282.9" width="2.0" height="0.5" fill="#e8e8e8" />
<rect x="996.0" y="286.0" width="2.0" height="0.5" fill="#e8e8e8" />
<rect x="996.0" y="289.1" width="2.0" height="0.5" fill="#e8e8e8" />
<rect x="996.0" y="292.2" width="2.0" height="0.5" fill="#e8e8e8" />
<rect x="996.0" y="295.3" width="2.0" height="0.5" fill="#e8e8e8" />
<rect x="996.0" y="298.4" width="2.0" height="0.5" fill="#e8e8e8" />
<polygon points="843.5,328.6 854.0,314.8 872.9,327.2 888.8,322.0 888.8,343.0 843.5,343.0" fill="#c7d9e8"/>
<polygon points="843.5,329.5 854.0,322.0 872.9,334.2 888.8,324.8 888.8,343.0 843.5,343.0" fill="#fde1c7"/>
<polygon points="843.5,335.9 854.0,331.4 872.9,337.2 888.8,332.6 888.8,343.0 843.5,343.0" fill="#fef2e4"/>
<polygon points="898.0,328.0 902.9,314.8 912.0,327.2 919.8,322.0 919.8,343.0 898.0,343.0" fill="#c7d9e8"/>
<polygon points="898.0,329.0 902.9,322.0 912.0,334.0 919.8,325.3 919.8,343.0 898.0,343.0" fill="#fde1c7"/>
<polygon points="898.0,335.5 902.9,331.4 912.0,337.2 919.8,332.6 919.8,343.0 898.0,343.0" fill="#fef2e4"/>
<polygon points="921.5,328.0 926.4,314.8 935.5,327.2 943.3,322.0 943.3,343.0 921.5,343.0" fill="#c7d9e8"/>
<polygon points="921.5,329.0 926.4,322.0 935.5,334.0 943.3,325.3 943.3,343.0 921.5,343.0" fill="#fde1c7"/>
<polygon points="921.5,335.5 926.4,331.4 935.5,337.2 943.3,332.6 943.3,343.0 921.5,343.0" fill="#fef2e4"/>
<rect x="958.5" y="327.7" width="4.5" height="15.3" fill="#c7d9e8" />
<rect x="965.8" y="323.1" width="4.3" height="19.9" fill="#c7d9e8" />
<rect x="973.1" y="331.0" width="4.5" height="12.0" fill="#c7d9e8" />
<rect x="980.4" y="314.8" width="4.5" height="28.2" fill="#c7d9e8" />
<rect x="987.9" y="326.9" width="4.1" height="16.1" fill="#c7d9e8" />
<polyline points="959.7,323.9 967.6,316.5 975.1,327.2 982.9,319.8 991.2,327.2" stroke="#fbd7b9" stroke-width="1.4" stroke-linejoin="round" stroke-linecap="round" />
<rect x="953.0" y="312.0" width="2.0" height="0.5" fill="#e8e8e8" />
<rect x="953.0" y="317.5" width="2.0" height="0.5" fill="#e8e8e8" />
<rect x="953.0" y="323.0" width="2.0" height="0.5" fill="#e8e8e8" />
<rect x="953.0" y="328.5" width="2.0" height="0.5" fill="#e8e8e8" />
<rect x="953.0" y="334.0" width="2.0" height="0.5" fill="#e8e8e8" />
<rect x="953.0" y="339.5" width="2.0" height="0.5" fill="#e8e8e8" />
<rect x="996.0" y="312.0" width="2.0" height="0.5" fill="#e8e8e8" />
<rect x="996.0" y="315.1" width="2.0" height="0.5" fill="#e8e8e8" />
<rect x="996.0" y="318.2" width="2.0" height="0.5" fill="#e8e8e8" />
<rect x="996.0" y="321.3" width="2.0" height="0.5" fill="#e8e8e8" />
<rect x="996.0" y="324.4" width="2.0" height="0.5" fill="#e8e8e8" />
<rect x="996.0" y="327.5" width="2.0" height="0.5" fill="#e8e8e8" />
<rect x="996.0" y="330.6" width="2.0" height="0.5" fill="#e8e8e8" />
<rect x="996.0" y="333.7" width="2.0" height="0.5" fill="#e8e8e8" />
<rect x="996.0" y="336.8" width="2.0" height="0.5" fill="#e8e8e8" />
<rect x="996.0" y="339.9" width="2.0" height="0.5" fill="#e8e8e8" />
<circle cx="860.6" cy="360.1" r="3.0" fill="none" stroke="#f5a04a" stroke-width="1.2"/>
<circle cx="879.5" cy="362.1" r="3.0" fill="none" stroke="#f5a04a" stroke-width="1.2"/>
<circle cx="853.4" cy="369.2" r="3.0" fill="none" stroke="#f5a04a" stroke-width="1.2"/>
<circle cx="863.4" cy="372.6" r="3.0" fill="none" stroke="#f5a04a" stroke-width="1.2"/>
<circle cx="848.0" cy="380.0" r="3.0" fill="none" stroke="#f5a04a" stroke-width="1.2"/>
<path d="M869.2 356.3h7.400M872.9 352.6v7.400" stroke="#3f9b6c" stroke-width="1.100"/>
<path d="M865.5 365.9h7.400M869.2 362.2v7.400" stroke="#3f9b6c" stroke-width="1.100"/>
<path d="M879.1 371.7h7.400M882.8 368.0v7.400" stroke="#3f9b6c" stroke-width="1.100"/>
<path d="M853.1 377.5h7.400M856.8 373.8v7.400" stroke="#3f9b6c" stroke-width="1.100"/>
<path d="M869.2 376.7h7.400M872.9 373.0v7.400" stroke="#3f9b6c" stroke-width="1.100"/>
<rect x="900.7" y="381.2" width="3.8" height="2.5" fill="#cfe6da" />
<rect x="905.3" y="376.7" width="3.8" height="7.0" fill="#cfe6da" />
<rect x="909.8" y="368.4" width="3.8" height="15.3" fill="#cfe6da" />
<rect x="914.4" y="359.6" width="3.8" height="24.1" fill="#cfe6da" />
<rect x="919.0" y="356.0" width="3.8" height="27.7" fill="#cfe6da" />
<rect x="923.6" y="359.6" width="3.8" height="24.1" fill="#cfe6da" />
<rect x="928.1" y="368.4" width="3.8" height="15.3" fill="#cfe6da" />
<rect x="932.7" y="376.7" width="3.8" height="7.0" fill="#cfe6da" />
<rect x="937.3" y="381.2" width="3.8" height="2.5" fill="#cfe6da" />
<rect x="956.1" y="365.9" width="6.2" height="3.3" fill="#8fd1a8" />
<rect x="956.1" y="369.2" width="6.2" height="7.0" fill="#3f9b6c" />
<path d="M959.2 358.5V379.5M957.0 358.5h4.400M957.0 379.5h4.400" stroke="#333" stroke-width="0.900" opacity="0.85"/>
<rect x="967.0" y="361.3" width="6.2" height="7.9" fill="#8fd1a8" />
<rect x="967.0" y="369.2" width="6.2" height="4.5" fill="#3f9b6c" />
<path d="M970.1 357.1V381.2M967.9 357.1h4.400M967.9 381.2h4.400" stroke="#333" stroke-width="0.900" opacity="0.85"/>
<rect x="977.8" y="363.9" width="6.2" height="7.0" fill="#8fd1a8" />
<rect x="977.8" y="370.9" width="6.2" height="7.0" fill="#3f9b6c" />
<path d="M980.9 356.3V382.2M978.7 356.3h4.400M978.7 382.2h4.400" stroke="#333" stroke-width="0.900" opacity="0.85"/>
<rect x="988.4" y="359.6" width="6.2" height="10.4" fill="#8fd1a8" />
<rect x="988.4" y="370.0" width="6.2" height="4.6" fill="#3f9b6c" />
<path d="M991.5 354.3V383.4M989.3 354.3h4.400M989.3 383.4h4.400" stroke="#333" stroke-width="0.900" opacity="0.85"/>
<rect x="844.3" y="395.0" width="8.0" height="6.6" fill="#cfe6da" />
<rect x="858.9" y="395.0" width="2.8" height="6.6" fill="#fbd7b9" />
<rect x="863.4" y="395.0" width="3.3" height="6.6" fill="#fde4cc" />
<rect x="873.4" y="395.0" width="1.3" height="6.6" fill="#fbd7b9" />
<rect x="878.8" y="395.0" width="7.0" height="6.6" fill="#fde4cc" />
<rect x="844.3" y="405.9" width="5.0" height="7.0" fill="#e0f2e6" />
<rect x="850.9" y="405.9" width="2.2" height="7.0" fill="#cfe6da" />
<rect x="857.1" y="405.9" width="3.5" height="7.0" fill="#cfe6da" />
<rect x="863.4" y="405.9" width="12.4" height="7.0" fill="#e0f2e6" />
<rect x="880.8" y="405.9" width="7.0" height="7.0" fill="#fbd7b9" />
<rect x="844.3" y="417.5" width="1.3" height="7.0" fill="#cfe6da" />
<rect x="849.0" y="417.5" width="6.9" height="7.0" fill="#fde4cc" />
<rect x="857.9" y="417.5" width="1.7" height="7.0" fill="#fbd7b9" />
<rect x="861.2" y="417.5" width="3.5" height="7.0" fill="#e0f2e6" />
<rect x="870.5" y="417.5" width="6.2" height="7.0" fill="#cfe6da" />
<rect x="882.5" y="417.5" width="3.3" height="7.0" fill="#fde4cc" />
<rect x="899.6" y="396.0" width="41.8" height="6.6" fill="#f3f3f3" />
<rect x="899.6" y="396.0" width="36.0" height="6.6" fill="#e4e4e4" />
<rect x="899.6" y="397.6" width="22.7" height="3.4" fill="#4fa77c" />
<rect x="925.1" y="395.3" width="1.0" height="8.0" fill="#222" />
<rect x="899.6" y="406.6" width="41.8" height="6.6" fill="#f3f3f3" />
<rect x="899.6" y="406.6" width="36.0" height="6.6" fill="#e4e4e4" />
<rect x="899.6" y="408.2" width="36.0" height="3.4" fill="#4fa77c" />
<rect x="931.3" y="405.9" width="1.0" height="8.0" fill="#222" />
<rect x="899.6" y="417.6" width="41.8" height="6.6" fill="#f3f3f3" />
<rect x="899.6" y="417.6" width="22.4" height="6.6" fill="#e4e4e4" />
<rect x="899.6" y="419.2" width="19.1" height="3.4" fill="#4fa77c" />
<rect x="936.8" y="416.9" width="1.0" height="8.0" fill="#222" />
<circle cx="963.5" cy="416.2" r="8.6" fill="#9fdab4"/>
<circle cx="964.3" cy="403.4" r="3.3" fill="#59a97c"/>
<circle cx="973.1" cy="401.3" r="4.6" fill="#59a97c"/>
<circle cx="981.7" cy="401.8" r="2.8" fill="#9fdab4"/>
<circle cx="990.9" cy="405.9" r="6.1" fill="#fdbb7d"/>
<circle cx="977.3" cy="410.7" r="5.3" fill="#fdbb7d"/>
<circle cx="985.9" cy="415.7" r="3.3" fill="#f28e2b"/>
<circle cx="976.9" cy="421.2" r="4.0" fill="#59a97c"/>
</svg>
<!-- THUMBS-END -->
<div class="pill" style="left:898px;top:482px;width:75px;background:#4996b2"></div>
<div class="pill" style="left:898px;top:508px;width:54px;background:#00b180"></div>

<!-- shapes -->
<svg class="ic" style="left:28px;top:165.0px" width="11" height="11" viewBox="0 0 11 11"><rect x="1.5" y="2.5" width="8" height="7" rx="1" fill="none" stroke="#4a8aa8" stroke-width="1"/><path d="M1.5 5h8M3.5 1v2M7.5 1v2" stroke="#4a8aa8" stroke-width="1" fill="none"/></svg>
<div class="pill" style="left:43.5px;top:181.0px;width:136.5px;background:#4996b2"></div>
<div class="pill" style="left:43.5px;top:200.0px;width:136.5px;background:#4996b2"></div>
<svg class="ic" style="left:28px;top:241.0px" width="11" height="11" viewBox="0 0 11 11"><rect x="1.5" y="2.5" width="8" height="7" rx="1" fill="none" stroke="#4a8aa8" stroke-width="1"/><path d="M1.5 5h8M3.5 1v2M7.5 1v2" stroke="#4a8aa8" stroke-width="1" fill="none"/></svg>
<div class="pill" style="left:43.5px;top:276.0px;width:136.5px;background:#4996b2"></div>
<svg class="ic" style="left:28.5px;top:318.0px" width="10" height="10" viewBox="0 0 10 10"><path d="M3.2 0.5v9M6.8 0.5v9M0.5 3.2h9M0.5 6.8h9" stroke="#4a8aa8" stroke-width="1" fill="none"/></svg>
<div class="pill" style="left:43.5px;top:489.3px;width:151.5px;background:#00b180"></div>
<svg class="ic" style="left:28.5px;top:493.3px" width="10" height="10" viewBox="0 0 10 10"><path d="M3.2 0.5v9M6.8 0.5v9M0.5 3.2h9M0.5 6.8h9" stroke="#3fae84" stroke-width="1" fill="none"/></svg>
<svg class="ic" style="left:28.5px;top:512.4px" width="10" height="10" viewBox="0 0 10 10"><path d="M3.2 0.5v9M6.8 0.5v9M0.5 3.2h9M0.5 6.8h9" stroke="#3fae84" stroke-width="1" fill="none"/></svg>
<div class="pill" style="left:43.5px;top:527.5px;width:151.5px;background:#00b180"></div>
<svg class="ic" style="left:28.5px;top:531.5px" width="10" height="10" viewBox="0 0 10 10"><path d="M3.2 0.5v9M6.8 0.5v9M0.5 3.2h9M0.5 6.8h9" stroke="#3fae84" stroke-width="1" fill="none"/></svg>
<svg class="ic" style="left:28.5px;top:550.6px" width="10" height="10" viewBox="0 0 10 10"><path d="M3.2 0.5v9M6.8 0.5v9M0.5 3.2h9M0.5 6.8h9" stroke="#3fae84" stroke-width="1" fill="none"/></svg>
<svg class="ic" style="left:28.5px;top:569.7px" width="10" height="10" viewBox="0 0 10 10"><path d="M3.2 0.5v9M6.8 0.5v9M0.5 3.2h9M0.5 6.8h9" stroke="#3fae84" stroke-width="1" fill="none"/></svg>
<div style="position:absolute;left:25px;top:573.7px;width:2px;height:2px;background:#7cc6aa"></div>
<svg class="ic" style="left:28.5px;top:588.8px" width="10" height="10" viewBox="0 0 10 10"><path d="M3.2 0.5v9M6.8 0.5v9M0.5 3.2h9M0.5 6.8h9" stroke="#3fae84" stroke-width="1" fill="none"/></svg>
<!-- texts -->
<span id="t0" class="t" style="left:26.0px;top:8.1px;font-size:12px;line-height:12px;color:#000;transform:scaleX(0.9646);text-shadow:0 0 6px #fff,0 0 8px #fff,0 0 10px #fff;">Tableau - ブック1</span>
<span id="t1" class="t" style="left:14.6px;top:32.5px;font-size:13px;line-height:13px;color:#111;transform:scaleX(0.8537);">ファイル(<u>F</u>)</span>
<span id="t2" class="t" style="left:87.9px;top:32.5px;font-size:13px;line-height:13px;color:#111;transform:scaleX(0.8725);">データ(<u>D</u>)</span>
<span id="t3" class="t" style="left:153.0px;top:32.5px;font-size:13px;line-height:13px;color:#111;transform:scaleX(0.8518);">ワークシート(<u>W</u>)</span>
<span id="t4" class="t" style="left:251.7px;top:32.5px;font-size:13px;line-height:13px;color:#111;transform:scaleX(0.8573);">ダッシュボード(<u>B</u>)</span>
<span id="t5" class="t" style="left:359.5px;top:32.5px;font-size:13px;line-height:13px;color:#111;transform:scaleX(0.8623);">ストーリー(<u>T</u>)</span>
<span id="t6" class="t" style="left:445.0px;top:32.5px;font-size:13px;line-height:13px;color:#111;transform:scaleX(0.8672);">分析(<u>A</u>)</span>
<span id="t7" class="t" style="left:497.6px;top:32.5px;font-size:13px;line-height:13px;color:#111;transform:scaleX(0.8679);">マップ(<u>M</u>)</span>
<span id="t8" class="t" style="left:562.8px;top:32.5px;font-size:13px;line-height:13px;color:#111;transform:scaleX(0.8614);">書式設定(<u>O</u>)</span>
<span id="t9" class="t" style="left:638.2px;top:32.5px;font-size:13px;line-height:13px;color:#111;transform:scaleX(0.8639);">サーバー(<u>S</u>)</span>
<span id="t10" class="t" style="left:713.2px;top:32.5px;font-size:13px;line-height:13px;color:#111;transform:scaleX(0.8510);">ウィンドウ(<u>N</u>)</span>
<span id="t11" class="t" style="left:798.4px;top:32.5px;font-size:13px;line-height:13px;color:#111;transform:scaleX(0.8760);">ヘルプ(<u>H</u>)</span>
<span id="t12" class="t" style="left:23.6px;top:92.4px;font-size:12.5px;line-height:12.5px;color:#111;transform:scaleX(0.7384);">データ</span>
<span id="t13" class="t" style="left:84.5px;top:92.4px;font-size:12.5px;line-height:12.5px;color:#222;transform:scaleX(0.6617);">アナリティクス</span>
<span id="t14" class="t" style="left:45.5px;top:118.3px;font-size:11.5px;line-height:11.5px;color:#555;transform:scaleX(0.8462);">注文 (サンプル - スーパース…</span>
<span id="t15" class="t" style="left:23.6px;top:143.9px;font-size:12.5px;line-height:12.5px;color:#222;transform:scaleX(0.6567);">ディメンション</span>
<span id="t16" class="t" style="left:50.4px;top:165.6px;font-size:12px;line-height:12px;color:#222;transform:scaleX(0.7198);">オーダー日</span>
<span id="t17" class="t" style="left:50.4px;top:184.6px;font-size:12px;line-height:12px;color:#fff;transform:scaleX(0.6477);">カテゴリ</span>
<span id="t18" class="t" style="left:26.0px;top:186.3px;font-size:8.5px;line-height:8.5px;color:#5590ae;transform:scaleX(0.9339);font-weight:bold;">Abc</span>
<span id="t19" class="t" style="left:50.4px;top:203.6px;font-size:12px;line-height:12px;color:#fff;transform:scaleX(0.6651);">サブカテゴリ</span>
<span id="t20" class="t" style="left:26.0px;top:205.3px;font-size:8.5px;line-height:8.5px;color:#5590ae;transform:scaleX(0.9339);font-weight:bold;">Abc</span>
<span id="t21" class="t" style="left:50.4px;top:222.6px;font-size:12px;line-height:12px;color:#222;transform:scaleX(0.7765);">出荷モード</span>
<span id="t22" class="t" style="left:26.0px;top:224.3px;font-size:8.5px;line-height:8.5px;color:#5590ae;transform:scaleX(0.9339);font-weight:bold;">Abc</span>
<span id="t23" class="t" style="left:50.4px;top:241.6px;font-size:12px;line-height:12px;color:#222;transform:scaleX(0.8635);">出荷日</span>
<span id="t24" class="t" style="left:50.4px;top:260.6px;font-size:12px;line-height:12px;color:#222;transform:scaleX(0.7990);">国</span>
<span id="t25" class="t" style="left:26.0px;top:262.3px;font-size:8.5px;line-height:8.5px;color:#5590ae;transform:scaleX(0.9339);font-weight:bold;">Abc</span>
<span id="t26" class="t" style="left:50.4px;top:279.6px;font-size:12px;line-height:12px;color:#fff;transform:scaleX(0.8994);">地域</span>
<span id="t27" class="t" style="left:26.0px;top:281.3px;font-size:8.5px;line-height:8.5px;color:#5590ae;transform:scaleX(0.9339);font-weight:bold;">Abc</span>
<span id="t28" class="t" style="left:50.4px;top:298.6px;font-size:12px;line-height:12px;color:#222;transform:scaleX(0.8914);">市区町村</span>
<span id="t29" class="t" style="left:26.0px;top:300.3px;font-size:8.5px;line-height:8.5px;color:#5590ae;transform:scaleX(0.9339);font-weight:bold;">Abc</span>
<span id="t30" class="t" style="left:50.4px;top:317.6px;font-size:12px;line-height:12px;color:#222;transform:scaleX(0.9655);">行 ID</span>
<span id="t31" class="t" style="left:50.4px;top:336.6px;font-size:12px;line-height:12px;color:#222;transform:scaleX(0.9481);">製品 ID</span>
<span id="t32" class="t" style="left:26.0px;top:338.3px;font-size:8.5px;line-height:8.5px;color:#5590ae;transform:scaleX(0.9339);font-weight:bold;">Abc</span>
<span id="t33" class="t" style="left:50.4px;top:355.6px;font-size:12px;line-height:12px;color:#222;transform:scaleX(0.8830);">製品名</span>
<span id="t34" class="t" style="left:26.0px;top:357.3px;font-size:8.5px;line-height:8.5px;color:#5590ae;transform:scaleX(0.9339);font-weight:bold;">Abc</span>
<span id="t35" class="t" style="left:50.4px;top:374.6px;font-size:12px;line-height:12px;color:#222;transform:scaleX(0.8914);">都道府県</span>
<span id="t36" class="t" style="left:26.0px;top:376.3px;font-size:8.5px;line-height:8.5px;color:#5590ae;transform:scaleX(0.9339);font-weight:bold;">Abc</span>
<span id="t37" class="t" style="left:50.4px;top:393.6px;font-size:12px;line-height:12px;color:#222;transform:scaleX(0.9481);">顧客 ID</span>
<span id="t38" class="t" style="left:26.0px;top:395.3px;font-size:8.5px;line-height:8.5px;color:#5590ae;transform:scaleX(0.9339);font-weight:bold;">Abc</span>
<span id="t39" class="t" style="left:50.4px;top:412.6px;font-size:12px;line-height:12px;color:#222;transform:scaleX(0.8914);">顧客区分</span>
<span id="t40" class="t" style="left:26.0px;top:414.3px;font-size:8.5px;line-height:8.5px;color:#5590ae;transform:scaleX(0.9339);font-weight:bold;">Abc</span>
<span id="t41" class="t" style="left:50.4px;top:431.6px;font-size:12px;line-height:12px;color:#222;transform:scaleX(0.8830);">顧客名</span>
<span id="t42" class="t" style="left:26.0px;top:433.3px;font-size:8.5px;line-height:8.5px;color:#5590ae;transform:scaleX(0.9339);font-weight:bold;">Abc</span>
<span id="t43" class="t" style="left:50.4px;top:450.6px;font-size:12px;line-height:12px;color:#222;transform:scaleX(0.7247);">メジャー ネーム</span>
<span id="t44" class="t" style="left:26.0px;top:452.3px;font-size:8.5px;line-height:8.5px;color:#5590ae;transform:scaleX(0.9339);font-weight:bold;">Abc</span>
<span id="t45" class="t" style="left:24.0px;top:472.2px;font-size:12.5px;line-height:12.5px;color:#222;transform:scaleX(0.6924);">メジャー</span>
<span id="t46" class="t" style="left:50.2px;top:492.9px;font-size:12px;line-height:12px;color:#fff;transform:scaleX(0.9036);">利益</span>
<span id="t47" class="t" style="left:50.2px;top:512.0px;font-size:12px;line-height:12px;color:#222;transform:scaleX(0.8996);">割引率</span>
<span id="t48" class="t" style="left:50.2px;top:531.1px;font-size:12px;line-height:12px;color:#fff;transform:scaleX(0.9036);">売上</span>
<span id="t49" class="t" style="left:50.2px;top:550.2px;font-size:12px;line-height:12px;color:#222;transform:scaleX(0.9036);">数量</span>
<span id="t50" class="t" style="left:50.2px;top:569.3px;font-size:12px;line-height:12px;color:#222;transform:scaleX(0.7148);">レコード数</span>
<span id="t51" class="t" style="left:50.2px;top:588.4px;font-size:12px;line-height:12px;color:#222;transform:scaleX(0.6815);">メジャー バリュー</span>
<span id="t52" class="t" style="left:210.0px;top:95.1px;font-size:12px;line-height:12px;color:#333;transform:scaleX(0.7270);">ページ</span>
<span id="t53" class="t" style="left:210.0px;top:156.8px;font-size:12px;line-height:12px;color:#333;transform:scaleX(0.6358);">フィルター</span>
<span id="t54" class="t" style="left:210.0px;top:233.1px;font-size:12px;line-height:12px;color:#333;transform:scaleX(0.6553);">マーク</span>
<span id="t55" class="t" style="left:237.0px;top:260.5px;font-size:11px;line-height:11px;color:#222;transform:scaleX(0.9545);">自動</span>
<span id="t56" class="t" style="left:225.3px;top:308.2px;font-size:8.8px;line-height:8.8px;color:#222;transform:scaleX(0.8965);">色</span>
<span id="t57" class="t" style="left:263.2px;top:308.1px;font-size:9.5px;line-height:9.5px;color:#222;transform:scaleX(0.6839);">サイズ</span>
<span id="t58" class="t" style="left:303.8px;top:308.1px;font-size:9.5px;line-height:9.5px;color:#222;transform:scaleX(0.6814);">テキスト</span>
<span id="t59" class="t" style="left:220.8px;top:351.4px;font-size:8.8px;line-height:8.8px;color:#222;transform:scaleX(0.8859);">詳細</span>
<span id="t60" class="t" style="left:257.0px;top:351.1px;font-size:9.5px;line-height:9.5px;color:#222;transform:scaleX(0.7366);">ツールヒ…</span>
<span id="t61" class="t" style="left:372.0px;top:93.5px;font-size:11px;line-height:11px;color:#333;transform:scaleX(0.9091);">列</span>
<span id="t62" class="t" style="left:372.0px;top:124.0px;font-size:11px;line-height:11px;color:#333;transform:scaleX(0.9091);">行</span>
<span id="t63" class="t" style="left:360.0px;top:163.7px;font-size:16.5px;line-height:16.5px;color:#222;transform:scaleX(0.8694);">シート 1</span>
<span id="t64" class="t" style="left:682.0px;top:403.4px;font-size:10px;line-height:10px;color:#888;transform:scaleX(0.7857);">ここにフィールドをドロップ</span>
<span id="t65" class="t" style="left:618.0px;top:63.2px;font-size:12px;line-height:12px;color:#222;transform:scaleX(0.9577);">標準</span>
<span id="t66" class="t" style="left:944.0px;top:61.7px;font-size:12.5px;line-height:12.5px;color:#222;transform:scaleX(0.9477);">表示形式</span>
<span id="t67" class="t" style="left:842.0px;top:449.3px;font-size:11px;line-height:11px;color:#222;transform:scaleX(0.8118);">テキスト表の場合、次を試してくださ</span>
<span id="t68" class="t" style="left:842.0px;top:462.0px;font-size:11px;line-height:11px;color:#222;transform:scaleX(0.8182);">い。</span>
<span id="t69" class="t" style="left:842.0px;top:485.4px;font-size:11px;line-height:11px;color:#222;transform:scaleX(0.9852);">1 個以上の</span>
<span id="t70" class="t" style="left:842.0px;top:511.8px;font-size:11px;line-height:11px;color:#222;transform:scaleX(0.9852);">1 個以上の</span>
<span id="t71" class="t" style="left:907.8px;top:485.6px;font-size:11px;line-height:11px;color:#fff;transform:scaleX(0.6978);">ディメンション</span>
<span id="t72" class="t" style="left:907.8px;top:511.8px;font-size:11px;line-height:11px;color:#fff;transform:scaleX(0.7410);">メジャー</span>
<span id="t73" class="t" style="left:28.7px;top:612.2px;font-size:12px;line-height:12px;color:#555;transform:scaleX(0.7318);">データ ソース</span>
<span id="t74" class="t" style="left:131.7px;top:612.0px;font-size:12.5px;line-height:12.5px;color:#555;transform:scaleX(0.7280);">シート 1</span>
<span id="t75" class="t" style="left:566.0px;top:219.3px;font-size:22px;line-height:22px;color:#fff;transform:scaleX(1.0076);font-weight:300;z-index:6;">「テキスト表」を選択</span>
<span id="t76" class="t" style="left:368.7px;top:374.3px;font-size:22.5px;line-height:22.5px;color:#fff;transform:scaleX(0.9696);font-weight:300;z-index:6;">表示したい項目を<span style="position:static;-webkit-text-stroke:.55px #4f81bd">Ctrl</span>を</span>
<span id="t77" class="t" style="left:386.0px;top:400.8px;font-size:22.5px;line-height:22.5px;color:#fff;transform:scaleX(0.9752);font-weight:300;z-index:6;">押しながらクリック</span>
<!-- annotations -->
<svg style="left:0;top:0;z-index:5" width="1024" height="657" viewBox="0 0 1024 657">
  <path d="M193.500 183 H210 Q217.500 183 217.500 191 V365 Q217.500 367.800 221 367.800 M225 367.800 Q217.500 368.500 217.500 377 V544.500 Q217.500 552 210 552 H193.500" fill="none" stroke="#ff0000" stroke-width="5.500" stroke-linejoin="round"/>
  <path d="M220 367.800 H242.500" fill="none" stroke="#ff0000" stroke-width="5.500" stroke-linecap="round"/>
  <path d="M546.600 191.500 H699.500 L849 128.300 L764.500 191.500 H808.300 V275.300 H546.600 Z" fill="#4f81bd" stroke="#385d8a" stroke-width="2" stroke-linejoin="round"/>
  <path d="M354.200 358.500 H616.200 V442.300 H354.200 V398 L254 367 L354.200 372 Z" fill="#4f81bd" stroke="#385d8a" stroke-width="2" stroke-linejoin="round"/>
</svg>

</div>
</body></html>
